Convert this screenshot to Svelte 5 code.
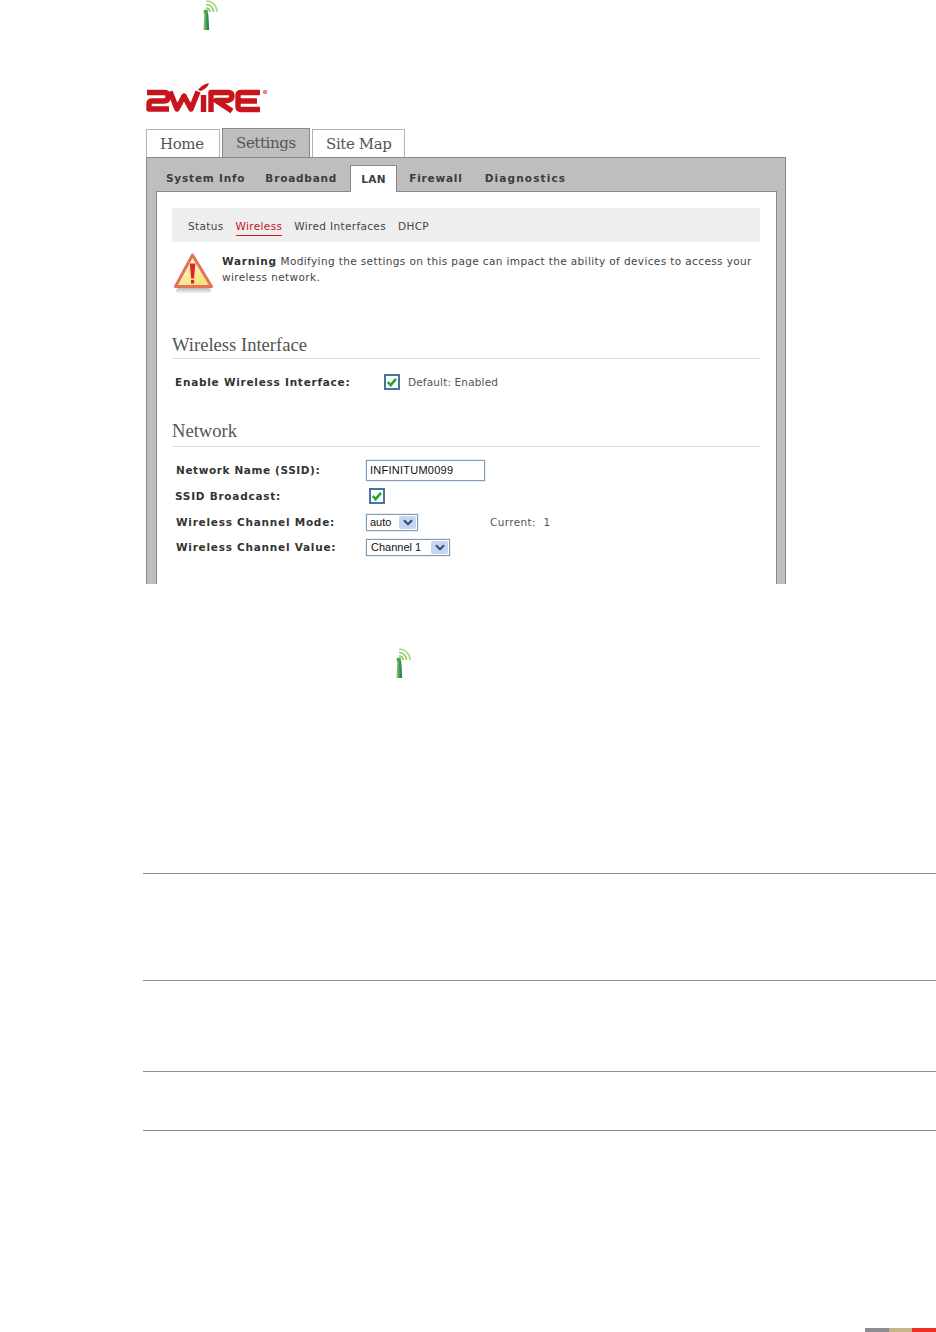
<script lang="ts">
	const topTabs = [
		{ label: 'Home', active: false },
		{ label: 'Settings', active: true },
		{ label: 'Site Map', active: false }
	];
	const subTabs = ['System Info', 'Broadband', 'LAN', 'Firewall', 'Diagnostics'];
	const pageLinks = ['Status', 'Wireless', 'Wired Interfaces', 'DHCP'];
</script>

{#snippet antenna()}
	<svg class="antenna" width="16" height="30" viewBox="0 0 16 30" fill="none" aria-hidden="true">
		<defs>
			<linearGradient id="mast" x1="0" x2="1" y1="0" y2="0">
				<stop offset="0" stop-color="#9ad09a" />
				<stop offset="0.55" stop-color="#3d9a4a" />
				<stop offset="1" stop-color="#1f7a3a" />
			</linearGradient>
		</defs>
		<path d="M2.400 13l-1 17h5.800l-1-17z" fill="url(#mast)" />
		<circle cx="3.800" cy="11.800" r="2.300" fill="#4f9f55" />
		<path d="M4 8a4 4 0 0 1 4 4" stroke="#8cc860" stroke-width="1.700" />
		<path d="M4 4.500a7.500 7.500 0 0 1 7.500 7.500" stroke="#9ad070" stroke-width="1.700" />
		<path d="M4 1a11 11 0 0 1 11 11" stroke="#aeda86" stroke-width="1.700" />
	</svg>
{/snippet}

{#snippet tick()}
	<span class="check">
		<svg width="12" height="12" viewBox="0 0 12 12" fill="none" aria-hidden="true">
			<path d="M1.800 6l2.800 3.200L10 2.800" stroke="#22a832" stroke-width="2.600" />
		</svg>
	</span>
{/snippet}

{#snippet arrow()}
	<span class="arrow">
		<svg width="10" height="7" viewBox="0 0 10 7" fill="none" aria-hidden="true">
			<path d="M1 1.200l4 4 4-4" stroke="#34527f" stroke-width="2.200" />
		</svg>
	</span>
{/snippet}

<div class="page">
	<div class="top-icon">{@render antenna()}</div>

	<div class="shot">
		<svg class="logo" width="124" height="32" viewBox="0 0 124 32" fill="none" aria-label="2Wire">
			<g stroke="#c8141b" stroke-width="5.400" stroke-linejoin="round">
				<path d="M1 10.500H18q4 0 4 3v2q0 3.500-4 3.500H6q-3 0-3 3v5H23" />
				<path d="M24 9.500L31 27l7-13 7 13 7-17.500" />
				<path d="M57.500 13v17" />
				<path d="M65 30V10.500H82q4 0 4 3.500t-4 4.500H70L86 29" />
				<path d="M114 10.500H95q-3 0-3 3v11q0 3 3 3h19M92 19h19" />
			</g>
			<path d="M52 8c2-3 6-6 11-7-1 4-4 6-8 8z" fill="#c8141b" />
			<circle cx="119" cy="10" r="2.200" fill="#d98a8a" />
		</svg>

		<nav class="tabs">
			{#each topTabs as tab}
				<span class="tab" class:active={tab.active}>{tab.label}</span>
			{/each}
		</nav>

		<div class="panel">
			<nav class="subtabs">
				{#each subTabs as tab}
					<span class="subtab" class:current={tab === 'LAN'}>{tab}</span>
				{/each}
			</nav>

			<div class="content">
				<div class="links">
					{#each pageLinks as link}
						<span class="link" class:on={link === 'Wireless'}>{link}</span>
					{/each}
				</div>

				<div class="warning">
					<svg width="42" height="43" viewBox="0 0 42 43" aria-hidden="true">
						<defs>
							<linearGradient id="warn" x1="0" x2="0.6" y1="0" y2="1">
								<stop offset="0" stop-color="#fffbe0" />
								<stop offset="1" stop-color="#f6e27a" />
							</linearGradient>
							<linearGradient id="shade" x1="0" x2="0" y1="0" y2="1">
								<stop offset="0" stop-color="#bbb" />
								<stop offset="1" stop-color="#fff" />
							</linearGradient>
						</defs>
						<rect x="3" y="36" width="35" height="6" rx="3" fill="url(#shade)" />
						<path d="M19.500 3L38.500 34.500H2.500z" fill="url(#warn)" stroke="#e0735a" stroke-width="3" stroke-linejoin="round" />
						<path d="M16.800 11.500h5.600l-1.400 15h-2.800z" fill="#e0202a" />
						<rect x="18" y="28" width="3.200" height="3.600" fill="#e0202a" />
					</svg>
					<p><b>Warning</b> Modifying the settings on this page can impact the ability of devices to access your wireless network.</p>
				</div>

				<h2 class="first">Wireless Interface</h2>
				<div class="enable">
					<b>Enable Wireless Interface:</b>
					{@render tick()}
					<span class="note default">Default: Enabled</span>
				</div>

				<h2 class="second">Network</h2>
				<div class="form">
					<b class="nudge tight">Network Name (SSID):</b>
					<input class="ssid" type="text" value="INFINITUM0099" readonly />

					<b>SSID Broadcast:</b>
					<div class="indent">{@render tick()}</div>

					<b class="nudge">Wireless Channel Mode:</b>
					<div class="with-current">
						<span class="select small">auto {@render arrow()}</span>
						<span class="note">Current:&nbsp; 1</span>
					</div>

					<b class="nudge">Wireless Channel Value:</b>
					<div><span class="select wide">Channel 1 {@render arrow()}</span></div>
				</div>
			</div>
		</div>
	</div>

	<div class="mid-icon">{@render antenna()}</div>

	<div class="rules">
		<div class="rule r1"></div>
		<div class="rule r2"></div>
		<div class="rule r3"></div>
		<div class="rule"></div>
	</div>

	<div class="footer-bar">
		<span class="grey"></span>
		<span class="tan"></span>
		<span class="red"></span>
	</div>
</div>

<style>
	:global(body) {
		margin: 0;
		background: #fff;
	}

	.page {
		width: 936px;
		height: 1332px;
		display: flex;
		flex-direction: column;
		overflow: hidden;
		font-family: "DejaVu Sans", sans-serif;
		color: #444;
	}

	.top-icon {
		height: 30px;
		padding-left: 202px;
	}

	.antenna {
		display: block;
	}

	.shot {
		width: 640px;
		margin: 52px 0 0 146px;
		height: 502px;
		display: flex;
		flex-direction: column;
	}

	.logo {
		display: block;
		margin-bottom: 14px;
	}

	.tabs {
		display: flex;
		align-items: flex-end;
		gap: 2px;
		height: 29px;
		font-family: "DejaVu Serif", serif;
	}

	.tab {
		height: 28px;
		box-sizing: border-box;
		padding: 0 13px;
		border: 1px solid #b4b4b4;
		border-bottom: 0;
		font-size: 15px;
		line-height: 28px;
		color: #555;
		letter-spacing: -0.4px;
		white-space: nowrap;
	}

	.tab:first-child {
		width: 74px;
	}

	.tab:nth-child(3) {
		width: 93px;
	}

	.tab.active {
		width: 88px;
		height: 29px;
		background: #bebebe;
		border: 1px solid #888;
		border-bottom: 0;
	}

	.panel {
		flex: 1;
		display: flex;
		flex-direction: column;
		background: #bebebe;
		border: 1px solid #888;
		border-bottom: 0;
		padding: 7px 8px 0 9px;
		min-height: 0;
	}

	.subtabs {
		display: flex;
		height: 26px;
		padding-left: 10px;
		font-size: 10.500px;
		font-weight: 700;
		letter-spacing: 0.8px;
		color: #3c3c3c;
	}

	.subtab {
		margin-right: 20px;
		line-height: 26px;
	}

	.subtab:nth-child(4) {
		margin-right: 22px;
	}

	.subtab:last-child {
		letter-spacing: 1.150px;
	}

	.subtab.current {
		background: #fff;
		border: 1px solid #888;
		border-bottom: 0;
		box-sizing: border-box;
		width: 47px;
		height: 27px;
		margin: 0 12px 0 -7px;
		text-align: center;
		letter-spacing: 0.4px;
		position: relative;
		z-index: 1;
	}

	.content {
		flex: 1;
		background: #fff;
		border-top: 1px solid #888;
		border-left: 1px solid #888;
		border-right: 1px solid #888;
		padding: 16px 16px 0 15px;
		font-size: 10.500px;
		letter-spacing: 0.38px;
		min-height: 0;
	}

	.links {
		box-sizing: border-box;
		height: 34px;
		background: #eee;
		padding: 2px 0 0 16px;
		display: flex;
		align-items: center;
		gap: 12px;
		letter-spacing: 0.35px;
	}

	.link {
		padding: 3px 0;
		border-bottom: 1px solid transparent;
	}

	.link.on {
		color: #c8141b;
		border-bottom-color: #d8141b;
	}

	.warning {
		display: flex;
		gap: 7px;
		margin: 10px 0 0 1px;
		height: 43px;
	}

	.warning p {
		margin: 1px 0 0;
		line-height: 16px;
		width: 535px;
	}

	h2 {
		margin: 0;
		font-family: "Liberation Serif", serif;
		font-weight: 400;
		font-size: 18.600px;
		letter-spacing: 0;
		color: #555;
		border-bottom: 1px solid #ddd;
	}

	.first {
		margin-top: 40px;
		height: 23px;
		line-height: 19px;
	}

	.second {
		margin-top: 29px;
		height: 27px;
		line-height: 23px;
	}

	b {
		color: #333;
		letter-spacing: 0.75px;
	}

	.enable {
		display: flex;
		align-items: center;
		margin: 15px 0 0 3px;
	}

	.enable b {
		width: 209px;
	}

	.enable .check {
		margin-right: 8px;
	}

	.note {
		color: #555;
	}

	.default {
		letter-spacing: 0.15px;
	}

	.check {
		display: flex;
		align-items: center;
		justify-content: center;
		box-sizing: border-box;
		width: 16px;
		height: 16px;
		border: 2px solid #4a7499;
		background: #fff;
	}

	.form {
		display: grid;
		grid-template-columns: 191px 1fr;
		grid-template-rows: 24px 28px 24px 26px;
		align-items: center;
		margin: 11px 0 0 3px;
	}

	.nudge {
		padding-left: 1px;
	}

	.tight {
		letter-spacing: 0.6px;
	}

	.ssid {
		box-sizing: border-box;
		width: 119px;
		height: 21px;
		border: 1px solid #7f9db9;
		box-shadow: 0 0 1px #7f9db9;
		padding: 0 3px;
		font-family: "Liberation Sans", sans-serif;
		font-size: 11px;
		letter-spacing: 0.25px;
		color: #111;
		outline: 0;
	}

	.indent {
		padding-left: 3px;
	}

	.with-current {
		display: flex;
		align-items: center;
		gap: 72px;
	}

	.select {
		display: inline-flex;
		align-items: center;
		justify-content: space-between;
		box-sizing: border-box;
		height: 17px;
		padding: 0 1px 0 3px;
		border: 1px solid #7f9db9;
		box-shadow: 0 0 1px #7f9db9;
		font-family: "Liberation Sans", sans-serif;
		font-size: 11px;
		letter-spacing: 0;
		color: #111;
		vertical-align: middle;
	}

	.select.small {
		width: 52px;
	}

	.select.wide {
		width: 84px;
		padding-left: 4px;
	}

	.arrow {
		display: flex;
		align-items: center;
		justify-content: center;
		width: 17px;
		height: 13px;
		background: #c6d5f2;
		border-radius: 2px;
	}

	.mid-icon {
		height: 30px;
		margin-top: 64px;
		padding-left: 395px;
	}

	.rules {
		margin: 195px 0 0 143px;
	}

	.rule {
		height: 1px;
		background: #909090;
	}

	.r1 {
		margin-bottom: 106px;
	}

	.r2 {
		margin-bottom: 90px;
	}

	.r3 {
		margin-bottom: 58px;
	}

	.footer-bar {
		margin-top: auto;
		margin-left: 865px;
		height: 4px;
		display: flex;
	}

	.footer-bar span {
		flex: 1;
	}

	.grey {
		background: #8c8c92;
	}

	.tan {
		background: #c8b48c;
	}

	.red {
		background: #ee3024;
	}
</style>
